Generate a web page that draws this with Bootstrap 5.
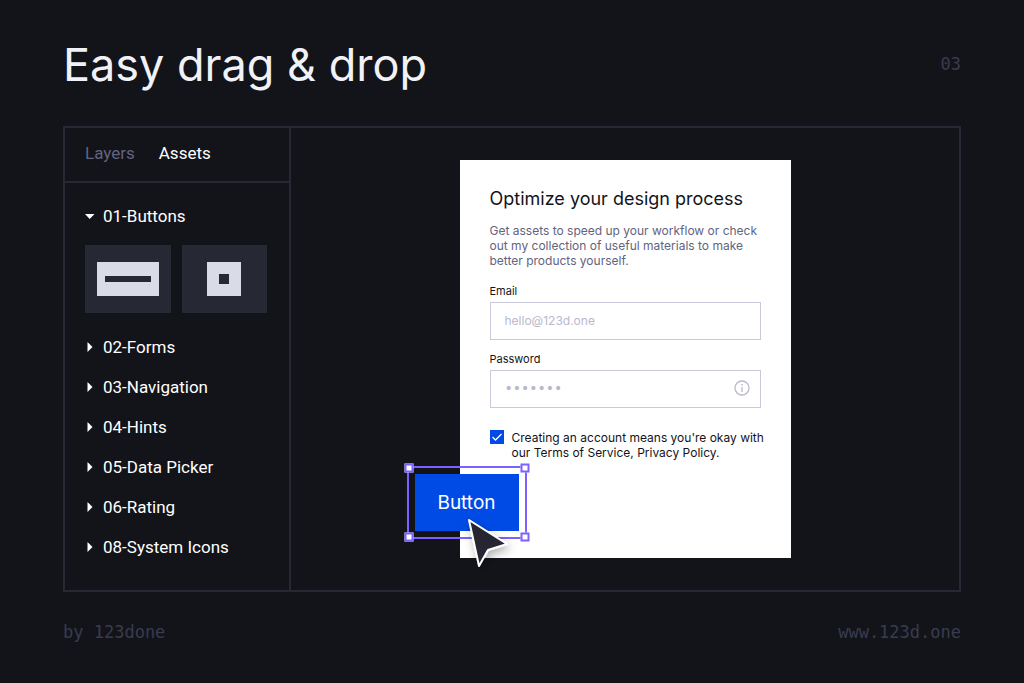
<!DOCTYPE html>
<html lang="en">
<head>
<meta charset="utf-8">
<meta name="viewport" content="width=device-width, initial-scale=1">
<title>Easy drag &amp; drop</title>
<link href="https://cdn.jsdelivr.net/npm/bootstrap@5.3.0/dist/css/bootstrap.min.css" rel="stylesheet">
<style>
  :root { --ink: #131419; --line: #262833; --muted: #3a3b4e; --blue: #004be6; --violet: #7b61ff; --field: #c8c9da; }
  body { background: var(--ink); color: #fff; font-family: Inter, sans-serif; font-size: 12px; line-height: 15px; }
  button { font-family: inherit; }
  .page { padding: 36px 63px 38px; }
  .page-title { font-size: 45px; line-height: 58px; font-weight: 400; color: #f1f2f8; }
  .mono { font-family: "DejaVu Sans Mono", monospace; font-size: 17px; line-height: 24px; color: var(--muted); }
  .editor { border: 2px solid var(--line); margin-top: 32px; margin-bottom: 28px; }
  .sidebar { width: 226px; border-right: 2px solid var(--line); font-family: Roboto, sans-serif; font-size: 17px; line-height: 24px; }
  .tabs { padding: 13px 20px 16px; gap: 24px; border-bottom: 2px solid var(--line); }
  .plain { background: none; border: 0; padding: 0; color: #fff; }
  .plain.off { color: #62637f; }
  .tree { padding: 13px 20px 0; }
  .branch { height: 40px; gap: 8px; }
  .tiles { gap: 11px; padding: 9px 2px 14px 0; }
  .tile { height: 68px; background: var(--line); }
  .stage { padding: 32px 16px; }
  .sheet { width: 331px; background: #fff; color: var(--ink); padding: 26px 30px 98px; }
  .sheet-title { font-size: 18px; line-height: 26px; font-weight: 400; margin-bottom: 11px; }
  .intro { color: #62637f; margin-bottom: 16px; }
  .caption { font-size: 11px; line-height: 14px; margin-bottom: 4px; }
  .field { height: 38px; padding: 0 14px 2px; border: 1px solid var(--field); border-radius: 0; font-size: 12px; background: #fff; }
  .field::placeholder { color: #b8b9cd; }
  .field.secret { color: #b8b9cd; font-family: "DejaVu Sans", sans-serif; font-size: 14px; }
  .info { right: 11px; top: 10px; }
  .agree { gap: 8px; margin-top: 22px; }
  .agree .form-check-input { width: 14px; height: 14px; border-radius: 0; margin: 0; flex: none; }
  .agree .form-check-input:checked { background-color: var(--blue); border-color: var(--blue); background-size: 14px 14px; background-image: url("data:image/svg+xml,%3csvg xmlns='http://www.w3.org/2000/svg' viewBox='0 0 14 14'%3e%3cpath fill='none' stroke='%23fff' stroke-width='1.300' d='M2.500 7 5.500 10 11.500 4'/%3e%3c/svg%3e"); }
  .selection { left: -53px; bottom: 19px; width: 120px; height: 73px; border: 2px solid var(--violet); padding: 6px; }
  .drop-btn { background: var(--blue); border: 0; color: #fff; font-size: 19px; line-height: 24px; }
  .handle { width: 9px; height: 9px; background: #fff; border: 2px solid var(--violet); }
  .pointer { left: 53px; top: 45px; }
</style>
</head>
<body>
<div class="page">
  <header class="d-flex justify-content-between">
    <h1 class="page-title mb-0">Easy drag &amp; drop</h1>
    <span class="mono mt-3">03</span>
  </header>

  <main class="editor d-flex">
    <aside class="sidebar flex-shrink-0">
      <nav class="tabs d-flex">
        <button type="button" class="plain off">Layers</button>
        <button type="button" class="plain">Assets</button>
      </nav>
      <div class="tree">
        <button type="button" class="plain branch d-flex align-items-center w-100" aria-expanded="true"><svg width="10" height="10" aria-hidden="true"><path d="M0 3h9.500L4.700 8z" fill="#fff"/></svg>01-Buttons</button>
        <div class="tiles d-flex">
          <div class="tile flex-fill d-flex align-items-center justify-content-center"><svg width="64" height="34"><path fill="#d9dbe7" d="M1 0h62v34H1z"/><path fill="#262833" d="M9 14h46v6H9z"/></svg></div>
          <div class="tile flex-fill d-flex align-items-center justify-content-center"><svg width="64" height="34"><path fill="#d9dbe7" d="M15 0h34v34H15z"/><path fill="#262833" d="M27 12h10v10H27z"/></svg></div>
        </div>
        <button type="button" class="plain branch d-flex align-items-center w-100"><svg width="10" height="10" aria-hidden="true"><path d="M2.500 0v10L7.500 5z" fill="#fff"/></svg>02-Forms</button>
        <button type="button" class="plain branch d-flex align-items-center w-100"><svg width="10" height="10" aria-hidden="true"><path d="M2.500 0v10L7.500 5z" fill="#fff"/></svg>03-Navigation</button>
        <button type="button" class="plain branch d-flex align-items-center w-100"><svg width="10" height="10" aria-hidden="true"><path d="M2.500 0v10L7.500 5z" fill="#fff"/></svg>04-Hints</button>
        <button type="button" class="plain branch d-flex align-items-center w-100"><svg width="10" height="10" aria-hidden="true"><path d="M2.500 0v10L7.500 5z" fill="#fff"/></svg>05-Data Picker</button>
        <button type="button" class="plain branch d-flex align-items-center w-100"><svg width="10" height="10" aria-hidden="true"><path d="M2.500 0v10L7.500 5z" fill="#fff"/></svg>06-Rating</button>
        <button type="button" class="plain branch d-flex align-items-center w-100"><svg width="10" height="10" aria-hidden="true"><path d="M2.500 0v10L7.500 5z" fill="#fff"/></svg>08-System Icons</button>
      </div>
    </aside>

    <section class="stage flex-fill d-flex justify-content-center">
      <form class="sheet position-relative">
        <h2 class="sheet-title text-nowrap">Optimize your design process</h2>
        <p class="intro text-nowrap">Get assets to speed up your workflow or check<br>out my collection of useful materials to make<br>better products yourself.</p>
        <label class="caption d-block" for="email">Email</label>
        <input class="field form-control" id="email" type="email" placeholder="hello@123d.one">
        <label class="caption d-block mt-2 pt-1" for="password">Password</label>
        <div class="position-relative">
          <input class="field secret form-control" id="password" type="password" value="1234567">
          <svg class="info position-absolute" width="16" height="16" fill="none" stroke="#b8b9cd" stroke-width="1.300" aria-hidden="true"><circle cx="8" cy="8" r="7"/><path d="M8 7v5"/><path d="M8 4v1.500" stroke-width="1.500"/></svg>
        </div>
        <div class="agree d-flex align-items-start">
          <input class="form-check-input" id="agree" type="checkbox" checked>
          <label class="text-nowrap" for="agree">Creating an account means you're okay with<br>our Terms of Service, Privacy Policy.</label>
        </div>
        <div class="selection position-absolute d-flex">
          <button type="button" class="drop-btn flex-fill">Button</button>
          <span class="handle position-absolute top-0 start-0 translate-middle"></span>
          <span class="handle position-absolute top-0 start-100 translate-middle"></span>
          <span class="handle position-absolute top-100 start-0 translate-middle"></span>
          <span class="handle position-absolute top-100 start-100 translate-middle"></span>
          <svg class="pointer position-absolute overflow-visible" width="50" height="56" aria-hidden="true">
            <defs><filter id="soft" x="-50%" y="-50%" width="200%" height="200%"><feDropShadow dx="2" dy="4" stdDeviation="5" flood-color="#000" flood-opacity=".3"/></filter></defs>
            <path d="M7 7 45 31 26 37 17 53z" fill="#262833" stroke="#fff" stroke-width="2" stroke-linejoin="round" filter="url(#soft)"/>
          </svg>
        </div>
      </form>
    </section>
  </main>

  <footer class="mono d-flex justify-content-between">
    <span>by 123done</span>
    <a class="text-reset text-decoration-none" href="#">www.123d.one</a>
  </footer>
</div>
<script src="https://cdn.jsdelivr.net/npm/bootstrap@5.3.0/dist/js/bootstrap.bundle.min.js"></script>
</body>
</html>
